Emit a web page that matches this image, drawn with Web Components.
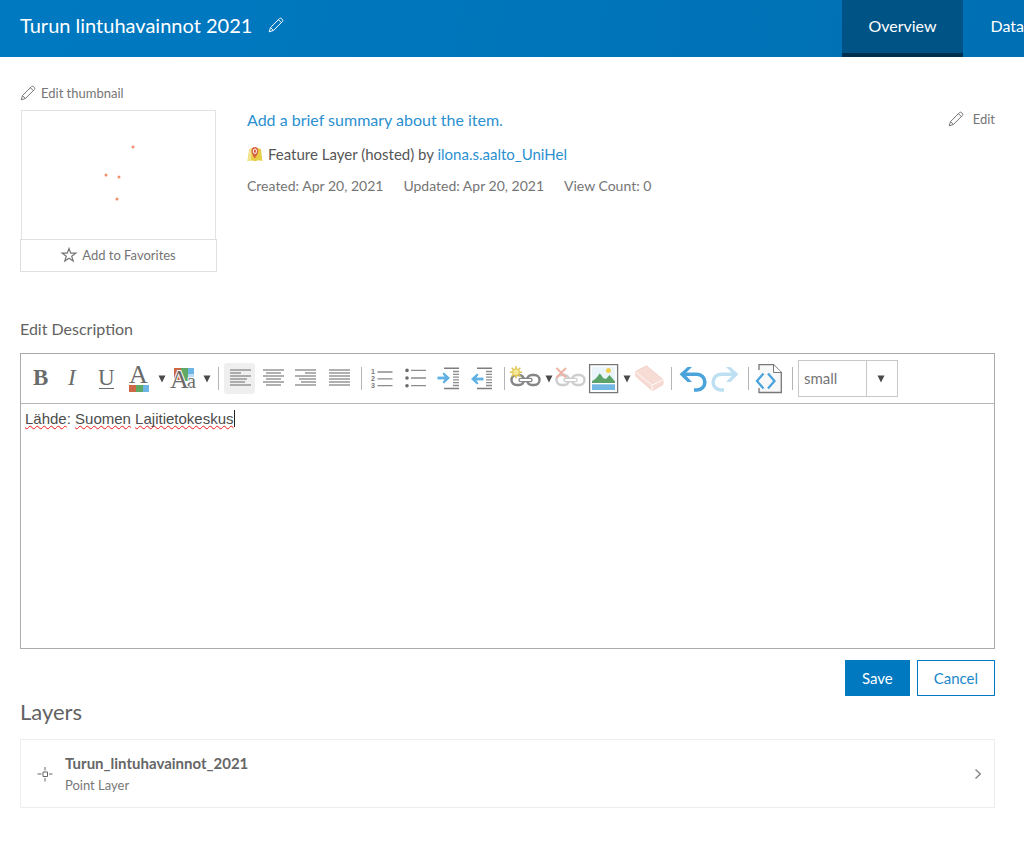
<!DOCTYPE html>
<html lang="en">
<head>
<meta charset="utf-8">
<meta name="viewport" content="width=device-width, initial-scale=1">
<title>Turun lintuhavainnot 2021</title>
<style>
  body { margin: 0; background: #fff; color: #626262; font-family: Lato, "Noto Sans", sans-serif; font-size: 16px; line-height: 24px; }
</style>
</head>
<body>
<item-page></item-page>

<script>
const pencil = '<svg viewBox="0 0 16 16" width="16" height="16" fill="none" stroke="currentColor" stroke-linejoin="round"><path d="M1.2 14.8 2.5 10.6 11.6 1.5Q12.6.7 13.8 1.8L14.3 2.3Q15.3 3.4 14.5 4.4L5.4 13.5Z"/><path d="M2.5 10.6 5.4 13.5M10.4 2.7 13.3 5.6"/></svg>';
const tool = body => `<svg viewBox="0 0 31 31" width="31" height="31" fill="none">${body}</svg>`;
const bars = list => tool(`<path stroke="#979797" stroke-width="1.5" d="${list.map(([x, w], i) => `M${x} ${7 + i * 3}h${w}`).join('')}"/>`);
const shorts = '<path stroke="#8c8c8c" stroke-width="1.3" d="M20 8.5h6M20 11.3h6M20 14.1h6M20 16.9h6M20 19.7h6M20 22.5h6"/><path stroke="#7e7e7e" stroke-width="1.5" d="M11 5.2h15M11 25.5h15"/>';
const chain = '<g stroke="#858585" stroke-width="2.4"><rect x="1.500" y="12" width="12.500" height="10" rx="5"/><rect x="17" y="12" width="12.500" height="10" rx="5"/></g><path stroke="#858585" stroke-width="4.400" stroke-linecap="round" d="M10.500 17H20.500"/><path stroke="#fff" stroke-width="1.800" stroke-linecap="round" d="M10.500 17H20.500"/>';
const curve = '<path stroke="currentColor" stroke-width="3.600" d="M4.500 11.300H20A7.850 7.850 0 0 1 20 27H17"/><path fill="currentColor" d="M2.600 11.300 10.500 4H15L7.600 11.300 15 19H10.500Z"/>';

const ICONS = {
  pencil,
  star: '<svg viewBox="0 0 16 16" width="16" height="16" fill="none" stroke="currentColor" stroke-width="1.200"><path d="M8 1.500 9.700 6.200H14.800L10.700 9.200 12.200 14.100 8 11.200 3.800 14.100 5.300 9.200 1.200 6.200H6.300Z"/></svg>',
  layer: '<svg viewBox="0 0 16 16" width="16" height="16"><path fill="#e6cf45" d="M2.400 3 5 2.200 8 3.200 12 2.200 13.900 3 15.300 15 11.500 14.300 8 15.200 4 14.300.500 15.200Z"/><path fill="#f3e48d" d="M2.400 3 5 2.200 4 14.300.500 15.200Z"/><path fill="#d9613f" d="M7.800 12.500C5.500 9 4.500 7.200 4.500 4.900a3.400 3.900 0 0 1 6.800 0C11.300 7.200 10 9 7.800 12.500Z"/><ellipse cx="7.900" cy="5.200" rx="1.600" ry="2.300" fill="#d9613f" stroke="#fff"/></svg>',
  point: '<svg viewBox="0 0 16 16" width="16" height="16" fill="none" stroke="#666"><path d="M6 6H10.500V10.500H6ZM8 1V4.500M8 12V15.500M.500 8H4.500M12 8H15.500"/></svg>',
  chevron: '<svg viewBox="0 0 8 12" width="8" height="12" fill="none" stroke="#858585" stroke-width="1.400"><path d="M1.500 1.500 6.300 6 1.500 10.500"/></svg>',
  down: '<svg viewBox="0 0 8 8" width="8" height="8"><path fill="#4a4a4a" d="M.500 .500H7.500L4 7.500Z"/></svg>',
  bold: tool('<text x="9" y="22" font-size="23" font-weight="700" fill="#6b6b6b">B</text>'),
  italic: tool('<text x="11" y="22" font-size="23" font-style="italic" fill="#6b6b6b">I</text>'),
  underline: tool('<text x="8" y="22" font-size="23" fill="#6b6b6b">U</text><path stroke="#6b6b6b" d="M9 25.500h15"/>'),
  color: tool('<text x="6" y="20" font-size="26" fill="#6b6b6b">A</text><path fill="#cc6747" d="M6 22h7v7H6z"/><path fill="#60a866" d="M13 22h7v7h-7z"/><path fill="#6db5e5" d="M20 22h6v7h-6z"/>'),
  highlight: tool('<path fill="#cc6747" d="M6 5h7v13H6z"/><path fill="#60a866" d="M13 5h7v13h-7z"/><path fill="#6db5e5" d="M20 5h6v6h-6z"/><path fill="#b9dcf2" d="M20 11h6v7h-6z"/><g fill="#6b6b6b" stroke="#fff" stroke-width="2" paint-order="stroke"><text x="19" y="25" font-size="20">a</text><text x="2" y="25" font-size="26">A</text></g>'),
  left: bars([[6, 21], [6, 11], [6, 21], [6, 17], [6, 15], [6, 21]]),
  center: bars([[6, 21], [9, 15], [6, 21], [9, 15], [6, 21], [9, 15]]),
  right: bars([[5, 21], [15, 11], [5, 21], [9, 17], [11, 15], [5, 21]]),
  justify: bars([[6, 21], [6, 21], [6, 21], [6, 21], [6, 21], [6, 21]]),
  numbers: tool('<path stroke="#8c8c8c" stroke-width="1.300" d="M10.500 9h15M10.500 15.800h15M10.500 22.700h15"/><g fill="#777" font-size="7" font-weight="700" style="font-family:\'Liberation Sans\',sans-serif"><text x="4" y="11">1</text><text x="4" y="18">2</text><text x="4" y="25">3</text></g>'),
  bullets: tool('<path stroke="#8c8c8c" stroke-width="1.300" d="M11 7.400h15M11 15h15M11 22.700h15"/><g fill="#6b6b6b"><circle cx="7" cy="7.400" r="1.800"/><circle cx="7" cy="15" r="1.800"/><circle cx="7" cy="22.700" r="1.800"/></g>'),
  indent: tool(shorts + '<path stroke="#62b1e3" stroke-width="2.800" d="M4.500 15H13"/><path fill="#62b1e3" d="M11 9.500 17 15 11 20.500 9.500 19.500 12.300 15 9.500 10.500Z"/>'),
  outdent: tool(shorts + '<path stroke="#62b1e3" stroke-width="2.800" d="M9 16H17.500"/><path fill="#62b1e3" d="M11 10.500 5 16 11 21.500 12.500 20.500 9.700 16 12.500 11.500Z"/>'),
  link: tool(chain + '<path stroke="#dfc34d" stroke-width="1.400" d="M6 3V15.500M-.200 9.200H12.200M1.600 4.800 10.400 13.600M10.400 4.800 1.600 13.600"/><circle cx="6" cy="9.200" r="3.500" fill="#f6e795" stroke="#dfc34d"/>'),
  unlink: tool('<g opacity=".4">' + chain + '</g><path stroke="#eeb3a2" stroke-width="2" d="M1.500 5 11 14.500M11 5 1.500 14.500"/>'),
  image: tool('<path fill="#fff" stroke="#777" stroke-width="1.300" d="M1.600 1.600h28v28h-28z"/><path fill="#e9f4fb" d="M4 4h23v15H4z"/><circle cx="20.500" cy="7.600" r="2.500" fill="#efd04e"/><path fill="#5ca36a" d="M4 20V18Q8 16.500 11.500 10.500 13 11 15 15L18 16 21.500 12 27 18.500V20Z"/><path fill="#72b8e3" d="M4 21.300h23V27H4z"/>'),
  eraser: tool('<path fill="#f6dcd5" stroke="#f1ccc2" stroke-width=".800" stroke-linejoin="round" d="M2.500 8.500 13.500 2.800 30 16.500V21.500L19.500 27.700 3 13.500Z"/><path stroke="#fff" stroke-width=".900" d="M2.500 8.800 19 22.300 30 16.500M19 22.300 19.500 27.700"/>'),
  undo: tool('<g color="#4ba3dc">' + curve + '</g>'),
  redo: tool('<g color="#bfdff2" transform="matrix(-1 0 0 1 31 0)">' + curve + '</g>'),
  source: tool('<path fill="#f8f8f8" stroke="#777" stroke-width="1.300" d="M5 7V1.700H19.500L27.300 9.500V29.500H5V25"/><path fill="#fff" stroke="#777" d="M19.500 1.700V9.500H27.300"/><path stroke="#fff" stroke-width="4.500" d="M9.500 10.500 3 18 9.500 25.500"/><path stroke="#4ba3dc" stroke-width="2.300" d="M9.500 10.500 3 18 9.500 25.500M14 10.500 20.500 18 14 25.500"/>')
};

function define(tag, css, render) {
  customElements.define(tag, class extends HTMLElement {
    connectedCallback() {
      if (this.shadowRoot) return;
      const template = document.createElement('template');
      template.innerHTML = `<style>*{box-sizing:border-box}${css}</style>${render(this)}`;
      this.attachShadow({ mode: 'open' }).append(template.content.cloneNode(true));
    }
  });
}

define('ui-icon', `
  :host { display: inline-flex; flex: none; font-family: "Liberation Serif", serif; }
  svg { display: block; overflow: visible; }
`, el => ICONS[el.getAttribute('name')]);

define('text-button', `
  :host { display: inline-flex; }
  button { display: flex; flex: 1; align-items: center; justify-content: center; gap: var(--gap, 5px); margin: 0; padding: 0; border: 0; background: none; color: #757575; font: 13px/24px Lato, sans-serif; cursor: pointer; }
`, el => `<button type="button"><ui-icon name="${el.getAttribute('icon')}"></ui-icon><slot></slot></button>`);

define('action-button', `
  :host { display: inline-flex; }
  button { height: 36px; padding: 0 16px; border: 1px solid #0079c1; background: #fff; color: #1b87c9; font: 15px/24px Lato, sans-serif; cursor: pointer; }
  :host([primary]) button { background: #0079c1; color: #fff; }
`, () => '<button type="button"><slot></slot></button>');

define('tool-button', `
  :host { display: flex; flex: none; width: 31px; margin-right: 2px; }
  :host([narrow]) { width: 12px; margin: 0; }
  button { display: flex; align-items: center; justify-content: center; width: 100%; height: 31px; margin: 0; padding: 0; border: 0; border-radius: 3px; background: none; }
  :host([active]) button { background: #efefef; }
`, el => `<button type="button" aria-label="${el.getAttribute('label')}"><ui-icon name="${el.getAttribute('icon')}"></ui-icon></button>`);

define('tool-separator', `
  :host { display: block; flex: none; width: 1px; height: 23px; margin: 0 5px; background: #b5b5b5; }
`, () => '');

define('size-select', `
  :host { display: block; position: relative; flex: none; width: 100px; height: 37px; }
  select { appearance: none; width: 100%; height: 100%; margin: 0; padding: 0 36px 2px 5px; border: 1px solid #c8c8c8; border-radius: 0; background: #fff; color: #757575; font: 15px/24px Lato, sans-serif; }
  span { position: absolute; top: 1px; right: 1px; bottom: 1px; width: 31px; border-left: 1px solid #c8c8c8; display: flex; align-items: center; justify-content: center; padding-right: 3px; pointer-events: none; }
`, () => `<select aria-label="Font size"><option>small</option><option>medium</option><option>large</option></select>
  <span><ui-icon name="down"></ui-icon></span>`);

define('page-tab', `
  :host { display: flex; }
  a { display: flex; align-items: center; padding: 0 26px 2px; border-bottom: 4px solid transparent; color: #fff; font-size: 16px; text-decoration: none; }
  :host([last]) a { padding-left: 28px; padding-right: 0; }
  :host([active]) a { background: #005485; border-bottom-color: #00304d; }
`, () => '<a href="#"><slot></slot></a>');

define('page-header', `
  :host { display: flex; height: 57px; overflow: hidden; background: linear-gradient(100deg, #0079c1, #0077bd 35%, #006fb3); color: #fff; }
  .title { display: flex; flex: 1; align-items: center; gap: 16px; padding: 0 20px 8px; }
  h1 { margin: 0; font-size: 20px; line-height: 28px; font-weight: 400; white-space: nowrap; }
  button { display: flex; margin: 0; padding: 0; border: 0; background: none; color: #fff; }
  nav { display: flex; }
`, () => `<div class="title"><h1><slot></slot></h1><button type="button" aria-label="Edit title"><ui-icon name="pencil"></ui-icon></button></div>
  <nav><page-tab active>Overview</page-tab><page-tab last>Data</page-tab></nav>`);

define('item-thumbnail', `
  :host { display: flex; flex-direction: column; align-items: flex-start; gap: 5px; }
  .card { width: 100%; }
  .map { display: block; width: calc(100% - 2px); height: 129px; margin: 0 1px; border: 1px solid #e3e3e3; border-bottom: 0; }
  .fav { display: flex; height: 33px; padding-bottom: 2px; border: 1px solid #dfdfdf; }
`, () => `<text-button icon="pencil">Edit thumbnail</text-button>
  <div class="card">
    <svg class="map" viewBox="0 0 193 128" role="img" aria-label="Map of observations" fill="#ef8f6c"><circle cx="111" cy="36" r="1.500"/><circle cx="84" cy="64" r="1.500"/><circle cx="97" cy="66" r="1.500"/><circle cx="95" cy="88" r="1.500"/></svg>
    <text-button class="fav" icon="star">Add to Favorites</text-button>
  </div>`);

define('item-summary', `
  :host { display: grid; grid-template-columns: 1fr auto; align-items: start; padding-top: 27px; }
  .info { display: grid; gap: 10px; }
  a { color: #2b90d0; text-decoration: none; }
  p { margin: 0; }
  .type { display: flex; align-items: center; gap: 5px; font-size: 15px; color: #565656; }
  .meta { display: flex; flex-wrap: wrap; gap: 0 20px; font-size: 14px; line-height: 20px; color: #757575; }
  text-button { --gap: 9px; margin-top: -1px; }
`, () => `<div class="info">
    <p><a href="#">Add a brief summary about the item.</a></p>
    <p class="type"><ui-icon name="layer"></ui-icon><span>Feature Layer (hosted) by <a href="#">ilona.s.aalto_UniHel</a></span></p>
    <p class="meta"><span>Created: Apr 20, 2021</span><span>Updated: Apr 20, 2021</span><span>View Count: 0</span></p>
  </div>
  <text-button icon="pencil">Edit</text-button>`);

const toolbar = [
  ['bold', 'Bold'], ['italic', 'Italic'], ['underline', 'Underline'], ['color', 'Text color'], ['down', 'Choose text color'], ['highlight', 'Highlight'], ['down', 'Choose highlight'], null,
  ['left', 'Align left'], ['center', 'Align center'], ['right', 'Align right'], ['justify', 'Justify'], null,
  ['numbers', 'Numbered list'], ['bullets', 'Bulleted list'], ['indent', 'Indent'], ['outdent', 'Outdent'], null,
  ['link', 'Insert link'], ['down', 'Link options'], ['unlink', 'Remove link'], ['image', 'Insert image'], ['down', 'Image options'], ['eraser', 'Clear formatting'], null,
  ['undo', 'Undo'], ['redo', 'Redo'], null,
  ['source', 'View source'], null
].map(t => t ? `<tool-button icon="${t[0]}" label="${t[1]}"${t[0] === 'down' ? ' narrow' : ''}${t[0] === 'left' ? ' active' : ''}></tool-button>` : '<tool-separator></tool-separator>').join('');

define('rich-editor', `
  :host { display: block; border: 1px solid #ababab; }
  .bar { display: flex; align-items: center; height: 50px; padding-left: 3px; border-bottom: 1px solid #b5b5b5; }
  .text { min-height: 244px; padding: 5px 4px; outline: 0; color: #4c4c4c; font: 15px/20px "Liberation Sans", Arial, sans-serif; }
  u { text-decoration: underline wavy #f01818 1px; text-underline-offset: 1px; text-decoration-skip-ink: none; }
  .caret { border-right: 1px solid #222; }
`, () => `<div class="bar" role="toolbar" aria-label="Formatting">${toolbar}<size-select></size-select></div>
  <div class="text" contenteditable="true" spellcheck="false" role="textbox" aria-multiline="true" aria-label="Edit Description"><u>Lähde</u>: <u>Suomen</u> <u class="caret">Lajitietokeskus</u></div>`);

define('layer-row', `
  :host { display: block; border: 1px solid #ededed; }
  a { display: flex; align-items: center; padding: 12px 12px 12px 16px; color: #666; text-decoration: none; }
  .names { flex: 1; padding-left: 12px; }
  strong, small { display: block; }
  strong { font-size: 15px; line-height: 23px; }
  small { font-size: 13px; line-height: 20px; color: #787878; }
`, el => `<a href="#"><ui-icon name="point"></ui-icon><span class="names"><strong><slot></slot></strong><small>${el.getAttribute('kind')}</small></span><ui-icon name="chevron"></ui-icon></a>`);

define('item-page', `
  :host { display: block; }
  main { padding: 24px 29px 35px 20px; }
  .top { display: grid; grid-template-columns: 197px 1fr; column-gap: 30px; margin-bottom: 45px; }
  h2 { margin: 0; font-weight: 400; }
  .label { margin-bottom: 12px; font-size: 16px; line-height: 24px; }
  .heading { margin: 2px 0 13px; font-size: 22px; line-height: 28px; }
  .actions { display: flex; justify-content: flex-end; gap: 7px; margin-top: 11px; }
`, () => `<page-header>Turun lintuhavainnot 2021</page-header>
  <main>
    <section class="top"><item-thumbnail></item-thumbnail><item-summary></item-summary></section>
    <section>
      <h2 class="label">Edit Description</h2>
      <rich-editor></rich-editor>
      <div class="actions"><action-button primary>Save</action-button><action-button>Cancel</action-button></div>
    </section>
    <section><h2 class="heading">Layers</h2><layer-row kind="Point Layer">Turun_lintuhavainnot_2021</layer-row></section>
  </main>`);
</script>
</body>
</html>
